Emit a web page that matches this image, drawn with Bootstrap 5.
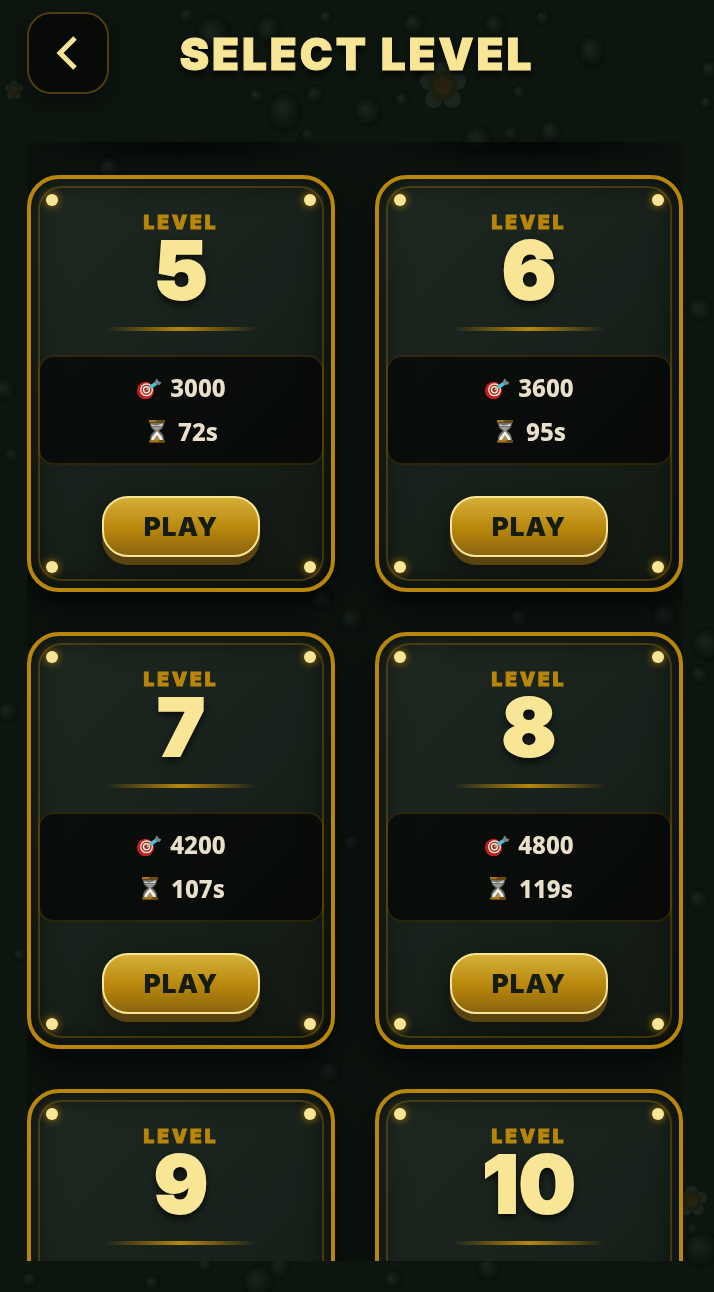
<!DOCTYPE html>
<html lang="en">
<head>
<meta charset="utf-8">
<meta name="viewport" content="width=device-width, initial-scale=1">
<title>Select Level</title>
<link href="https://cdn.jsdelivr.net/npm/bootstrap@5.3.0/dist/css/bootstrap.min.css" rel="stylesheet">
<style>
:root{--gold:#b8860b;--cream:#f9e596;--ink:#0d150f}
body{background:var(--ink);color:var(--cream);font-family:Inter,"Noto Sans",sans-serif;font-weight:900}
.backdrop{position:fixed;inset:0;width:100%;height:100%;z-index:-1}
.screen{padding:12px 31px 31px 27px}
.top-bar{height:130px}
.back-btn{width:82px;height:82px;background:#070a07;border:2px solid #4f3b10;border-radius:24px;box-shadow:0 8px 24px rgba(0,0,0,.4)}
.back-btn:hover{background:#11170f}
.title{font-size:44px;line-height:84px;letter-spacing:3px;font-weight:900;-webkit-text-stroke:1px var(--cream);text-shadow:0 4px 6px rgba(0,0,0,.8);padding-right:78px}
.levels{scrollbar-width:none;background:rgba(0,0,0,.12)}
.levels::-webkit-scrollbar{display:none}
.level-grid{grid-template-columns:1fr 1fr;gap:40px;padding-top:33px;background:radial-gradient(ellipse at center,rgba(0,0,0,.65),transparent 70%) 0 -28px/308px 56px no-repeat,radial-gradient(ellipse at center,rgba(0,0,0,.65),transparent 70%) 100% -28px/308px 56px no-repeat}
.level-card{position:relative;height:417px;padding:32px 7px 0;border:4px solid var(--gold);border-radius:32px;background:linear-gradient(135deg,#1e2922,#18211b 50%,#121812);box-shadow:0 14px 26px rgba(0,0,0,.65),inset 0 0 30px rgba(0,0,0,.7)}
.level-card::after{content:"";position:absolute;inset:7px;border:2px solid rgba(184,134,11,.3);border-radius:24px;pointer-events:none}
.stud{position:absolute;width:12px;height:12px;border-radius:50%;background:var(--cream);box-shadow:0 0 8px var(--gold)}
.stud-tl{top:15px;left:15px}.stud-tr{top:15px;right:15px}.stud-bl{bottom:15px;left:15px}.stud-br{bottom:15px;right:15px}
.level-word{font-size:19px;line-height:24px;letter-spacing:3px;color:var(--gold);-webkit-text-stroke:1px var(--gold)}
.level-no{font-size:80px;line-height:70px;-webkit-text-stroke:2px var(--cream);text-shadow:0 4px 8px rgba(0,0,0,.8)}
.rule{width:152px;height:4px;margin-top:22px;background:linear-gradient(90deg,transparent,var(--gold),transparent)}
.stats{width:100%;height:110px;margin-top:24px;background:rgba(0,0,0,.6);border:2px solid rgba(184,134,11,.2);border-radius:16px;color:#eadfc9;font:800 24px/40px "Noto Sans",sans-serif}
.play-btn{width:158px;height:61px;margin-top:31px;border:2px solid var(--cream);border-radius:26px;background:linear-gradient(#d4af37,#b8860b 55%,#8b6510);box-shadow:0 8px 0 #5a430f,0 12px 24px rgba(0,0,0,.4);color:#141c14;font-size:26px;font-weight:900;letter-spacing:1px}
.play-btn:hover{filter:brightness(1.1)}
</style>
</head>
<body>
<svg class="backdrop" viewBox="0 0 714 1292" preserveAspectRatio="xMidYMid slice" aria-hidden="true">
<defs>
<radialGradient id="drop" fx=".4" fy=".4"><stop offset="0" stop-color="#1b2520"/><stop offset=".5" stop-color="#101812"/><stop offset=".8" stop-color="#0a110c"/><stop offset="1" stop-color="#0d150f" stop-opacity="0"/></radialGradient>
<g id="flower"><g fill="#1a251e"><circle cy="-15" r="9"/><circle cx="14" cy="-5" r="9"/><circle cx="9" cy="13" r="9"/><circle cx="-9" cy="13" r="9"/><circle cx="-14" cy="-5" r="9"/></g><circle r="15" fill="#1b1f12"/><circle r="9" fill="#29210f"/></g>
</defs>
<rect width="714" height="1292" fill="#0d150f"/>
<g fill="url(#drop)">
<ellipse cx="285" cy="112" rx="21" ry="24"/><ellipse cx="269" cy="30" rx="16" ry="18"/><circle cx="214" cy="34" r="22"/><circle cx="187" cy="16" r="11"/><circle cx="257" cy="96" r="10"/><circle cx="315" cy="95" r="12"/><circle cx="308" cy="135" r="9"/><circle cx="326" cy="17" r="9"/><circle cx="368" cy="112" r="18"/><circle cx="402" cy="100" r="10"/><circle cx="414" cy="24" r="14"/><circle cx="495" cy="25" r="14"/><circle cx="543" cy="18" r="10"/><ellipse cx="592" cy="52" rx="17" ry="20"/><ellipse cx="551" cy="132" rx="14" ry="14"/><circle cx="478" cy="140" r="18"/><circle cx="511" cy="134" r="10"/><circle cx="519" cy="92" r="9"/><circle cx="710" cy="70" r="12"/><circle cx="706" cy="103" r="9"/><circle cx="110" cy="168" r="15"/><circle cx="700" cy="310" r="16"/><circle cx="4" cy="390" r="15"/><circle cx="12" cy="455" r="10"/><circle cx="352" cy="620" r="16"/><circle cx="519" cy="618" r="12"/><circle cx="665" cy="616" r="16"/><circle cx="708" cy="645" r="20"/><circle cx="323" cy="600" r="15"/><circle cx="700" cy="675" r="12"/><circle cx="8" cy="712" r="14"/><circle cx="352" cy="843" r="11"/><circle cx="699" cy="900" r="14"/><circle cx="20" cy="955" r="9"/><circle cx="330" cy="1072" r="14"/><circle cx="702" cy="1250" r="22"/><circle cx="489" cy="1269" r="15"/><circle cx="259" cy="1282" r="20"/><circle cx="280" cy="1268" r="14"/><circle cx="205" cy="1265" r="10"/><circle cx="152" cy="1283" r="10"/><circle cx="393" cy="1280" r="12"/><circle cx="30" cy="1280" r="10"/><circle cx="693" cy="1229" r="8"/>
</g>
<use href="#flower" x="443" y="86"/>
<use href="#flower" transform="translate(14 90) scale(.4)"/>
<use href="#flower" transform="translate(692 1201) scale(.65)"/>
</svg>

<svg class="d-none" aria-hidden="true">
<symbol id="ic-target" viewBox="0 0 26 24"><ellipse cx="9.500" cy="14.500" rx="8.500" ry="8.800" fill="#c5201f"/><circle cx="10.500" cy="13.800" r="6.500" fill="#f3e7dc"/><circle cx="10.500" cy="13.800" r="5.100" fill="#a32a20"/><circle cx="10.500" cy="13.800" r="3.700" fill="#f3e7dc"/><circle cx="10.500" cy="13.800" r="2.300" fill="#8c2a1c"/><path d="M10.500 13.800 15 11" stroke="#c9b9a0" stroke-width="1.500"/><path d="M14.500 11.300 20.500 7" stroke="#45c5d4" stroke-width="3.600"/><path d="m19 7 .5-3L21 2.500l1.500 2.500 3 1.500L23.500 9 20 8.500Z" fill="#75838a"/></symbol>
<symbol id="ic-glass" viewBox="0 0 26 24"><path d="M6 2h14c0 5-2 7-5 9 3 2 5 4 5 9H6c0-5 2-7 5-9-3-2-5-4-5-9" fill="#6d706c"/><path d="M7 4c3 2 8 2 12-1l-1 3H8Z" fill="#d9dad8"/><path d="M8 7h10l-5 4Z" fill="#a29b8c"/><path d="m13 11 5 6 1 4H7l1-4Z" fill="#f2efea"/><path d="m13 15 4 6H9Z" fill="#a98b50"/><path d="M5 0h16v3H5Zm0 20h16v3H5Z" fill="#694812"/><path d="M5 0h8l-2 2H5Zm2 20h9l-2 2H6Z" fill="#a87522"/></symbol>
</svg>

<main class="screen vh-100 d-flex flex-column">
<header class="top-bar d-flex align-items-start flex-shrink-0">
<button class="back-btn d-flex align-items-center justify-content-center p-0 flex-shrink-0" type="button" aria-label="Back"><svg width="40" height="40" viewBox="0 0 40 40" fill="none" stroke="#f9e596" stroke-width="5"><path d="M27 5 12 20 27 35"/></svg></button>
<h1 class="title flex-grow-1 text-center text-nowrap mb-0">SELECT LEVEL</h1>
</header>
<section class="levels flex-grow-1 overflow-auto" aria-label="Levels">
<div class="level-grid d-grid" id="levels"></div>
</section>
</main>
<script src="https://cdn.jsdelivr.net/npm/bootstrap@5.3.0/dist/js/bootstrap.bundle.min.js"></script>
<script>
const levels=[[5,3000,72],[6,3600,95],[7,4200,107],[8,4800,119],[9],[10]];
const stats=(goal,time)=>`<div class="stats d-flex flex-column justify-content-center gap-1">
<div class="d-flex justify-content-center align-items-center gap-2"><svg width="26" height="24"><use href="#ic-target"/></svg><span>${goal}</span></div>
<div class="d-flex justify-content-center align-items-center gap-2"><svg width="26" height="24"><use href="#ic-glass"/></svg><span>${time}s</span></div></div>
<button class="play-btn p-0" type="button">PLAY</button>`;
document.getElementById('levels').innerHTML=levels.map(([n,goal,time])=>`<article class="level-card d-flex flex-column align-items-center">
<i class="stud stud-tl"></i><i class="stud stud-tr"></i><i class="stud stud-bl"></i><i class="stud stud-br"></i>
<div class="level-word">LEVEL</div><div class="level-no">${n}</div><div class="rule"></div>${goal?stats(goal,time):''}</article>`).join('');
</script>
</body>
</html>
